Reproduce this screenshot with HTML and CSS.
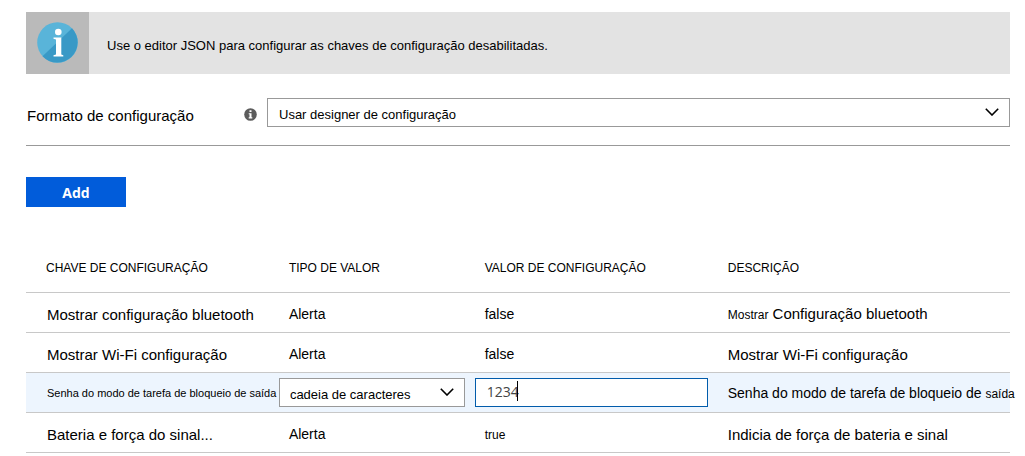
FILE: index.html
```html
<!DOCTYPE html>
<html lang="pt-BR">
<head>
<meta charset="utf-8">
<title>Configuração</title>
<link rel="stylesheet" href="styles.css">
</head>
<body>
<main class="page">
  <div class="banner">
    <div class="banner-icon">
      <svg width="41" height="42" viewBox="0 0 41 42" aria-hidden="true">
        <circle cx="20.500" cy="20.500" r="20.300" fill="#59b4d9"/>
        <path d="M35 6.200A20.300 20.300 0 1 1 5.500 34.300Z" fill="#3999c6"/>
        <circle cx="21.300" cy="10" r="3.300" fill="#fff"/>
        <path d="M16.500 15.500h7.800v17l2 .8v1.200H16.500v-1.200l2.500-.8v-15l-2.500-.8z" fill="#fff"/>
      </svg>
    </div>
    <p class="banner-text">Use o editor JSON para configurar as chaves de configuração desabilitadas.</p>
  </div>

  <div class="format">
    <label class="format-label" for="format">Formato de configuração</label>
    <svg class="hint" width="13" height="13" viewBox="0 0 13 13" aria-hidden="true">
      <circle cx="6.500" cy="6.500" r="6.300" fill="#5c5c5c"/>
      <path d="M5.500 2.300h2v1.800h-2zM4.700 5.200h2.800v4h.8v1.200H4.700V9.200h.8V6.300h-.8z" fill="#fff"/>
    </svg>
    <div class="select">
      <select id="format"><option>Usar designer de configuração</option></select>
      <svg class="chevron" width="14" height="8" viewBox="0 0 14 8" aria-hidden="true"><path d="M.8.8 7 7 13.200.8"/></svg>
    </div>
  </div>

  <button class="add" type="button">Add</button>

  <table class="keys">
    <colgroup><col class="col-key"><col class="col-type"><col class="col-value"><col class="col-desc"></colgroup>
    <thead>
      <tr><th>CHAVE DE CONFIGURAÇÃO</th><th>TIPO DE VALOR</th><th>VALOR DE CONFIGURAÇÃO</th><th>DESCRIÇÃO</th></tr>
    </thead>
    <tbody>
      <tr><td>Mostrar configuração bluetooth</td><td class="medium">Alerta</td><td class="medium">false</td><td><span class="small">Mostrar</span> Configuração bluetooth</td></tr>
      <tr><td>Mostrar Wi-Fi configuração</td><td class="medium">Alerta</td><td class="medium">false</td><td>Mostrar Wi-Fi configuração</td></tr>
      <tr class="active">
        <td class="small">Senha do modo de tarefa de bloqueio de saída</td>
        <td class="control">
          <div class="select">
            <select aria-label="Tipo de valor"><option>cadeia de caracteres</option></select>
            <svg class="chevron" width="14" height="8" viewBox="0 0 14 8" aria-hidden="true"><path d="M.8.8 7 7 13.200.8"/></svg>
          </div>
        </td>
        <td class="control">
          <div class="field"><input type="text" value="1234" aria-label="Valor de configuração"><span class="caret"></span></div>
        </td>
        <td class="medium">Senha do modo de tarefa de bloqueio de <span class="small">saída</span></td>
      </tr>
      <tr><td>Bateria e força do sinal...</td><td class="medium">Alerta</td><td class="small">true</td><td>Indicia de força de bateria e sinal</td></tr>
    </tbody>
  </table>
</main>
</body>
</html>
```
FILE: styles.css
```css
* { box-sizing: border-box; }

body {
  margin: 0;
  background: #fff;
  color: #000;
  font: 15px/20px "Liberation Sans", Arial, sans-serif;
}

.page { padding: 12px 15px 0 26px; }

.banner {
  display: flex;
  min-height: 62px;
  background: #e3e3e3;
}
.banner-icon {
  display: flex;
  align-items: center;
  justify-content: center;
  width: 63px;
  background: #bababa;
}
.banner-text {
  align-self: center;
  margin: 0;
  padding: 5px 18px 0;
  font-size: 13px;
}

.format {
  display: flex;
  align-items: center;
  padding: 24px 0 18px;
  border-bottom: 1px solid #999;
}
.format-label { width: 218px; padding: 6px 0 0 1px; }
.hint { margin: 4px 10px 0 0; }

.select { position: relative; flex: 1; }
select {
  display: block;
  width: 100%;
  height: 29px;
  padding: 3px 32px 0 11px;
  appearance: none;
  border: 1px solid #999;
  border-radius: 0;
  background: #fff;
  color: #000;
  font: 13px "Liberation Sans", Arial, sans-serif;
}
.chevron {
  position: absolute;
  top: 10px;
  right: 11px;
  fill: none;
  stroke: #000;
  stroke-width: 1.6;
  pointer-events: none;
}

.add {
  display: block;
  width: 100px;
  height: 30px;
  margin: 31px 0 36px;
  padding: 0;
  border: 0;
  background: #015cda;
  color: #fff;
  font: 700 14px "Open Sans", "Noto Sans", sans-serif;
}

.keys {
  width: 100%;
  table-layout: fixed;
  border-collapse: separate;
  border-spacing: 0;
}
.col-key { width: 25.7%; }
.col-type { width: 19.9%; }
.col-value { width: 24.7%; }
.col-desc { width: 29.7%; }

th, td {
  border-bottom: 1px solid #c8c8c8;
  text-align: left;
  white-space: nowrap;
}
th {
  height: 50px;
  padding: 0 10px;
  font-size: 12px;
  font-weight: 400;
}
td {
  height: 40px;
  padding: 4px 0 0 10px;
}
th:first-child { padding-left: 20px; }
td:first-child { padding-left: 21px; }
.medium { font-size: 14px; }
td.medium { padding-top: 2px; }
.small { font-size: 12px; }
td.small { padding-top: 5px; }
td.small:first-child { font-size: 11px; padding-top: 0; }
.active td { background: #edf5fe; }
td.control { padding: 0 10px 0 0; }
.control select { padding-left: 10px; }

.field { position: relative; }
input {
  display: block;
  width: 100%;
  height: 29px;
  padding: 0 11px 2px;
  border: 1px solid #015cab;
  border-radius: 0;
  background: #fff;
  color: #444;
  font: 14px "Open Sans", "Noto Sans", sans-serif;
}
.caret {
  position: absolute;
  top: 3px;
  left: 42px;
  width: 1px;
  height: 20px;
  background: #000;
}
```
